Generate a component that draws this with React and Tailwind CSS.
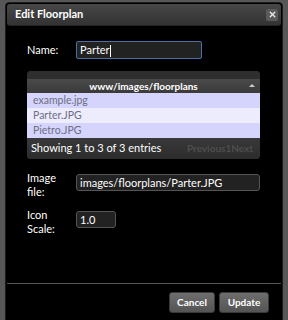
import { X } from 'lucide-react'

const ROWS = [
  ['example.jpg', 'bg-[#d4d4fc]'],
  ['Parter.JPG', 'bg-[#ececfd]'],
  ['Pietro.JPG', 'bg-[#d4d4fc]'],
]

const label = 'w-[49px] text-[11px] leading-[14px] text-white'
const field = 'h-[17px] bg-[#222] border border-[#555] rounded-[3px] px-[3px] text-[11px] leading-[15px] text-white'

export default function App() {
  return (
    <div className="w-[288px] h-[320px] bg-[#575757] overflow-hidden pt-[2px] pl-[5px]" style={{ fontFamily: 'Lato, "Open Sans", sans-serif' }}>
      <div className="w-[278px] h-[330px] bg-black border border-[#1c1c1c] rounded-t-[4px] flex flex-col">
        <div className="h-[22px] mx-px mt-px rounded-[3px] bg-gradient-to-b from-[#474747] to-[#333] border-b border-[#222] flex items-center justify-between pl-[8px] pr-[3px]">
          <span className="text-[11px] font-bold text-white">Edit Floorplan</span>
          <span className="w-[12px] h-[12px] rounded-[2px] bg-[#5a5a5a] flex items-center justify-center">
            <X size={9} strokeWidth={3.5} color="#eee" />
          </span>
        </div>

        <div className="pl-[21px] pr-[22px]">
          <div className="flex items-center mt-[15px]">
            <span className={label}>Name:</span>
            <div className="w-[126px] h-[18px] bg-[#222] border border-[#4a6fa8] rounded-[2px] px-[3px] text-[11px] leading-[16px] text-white">
              Parter<span className="inline-block w-px h-[12px] bg-white align-middle" />
            </div>
          </div>

          <div className="mt-[12px] w-[233px] rounded-[4px] overflow-hidden bg-[#333]">
            <div className="h-[8px] bg-[#2e2e2e]" />
            <div className="h-[14px] bg-gradient-to-b from-[#4a4a4a] to-[#3a3a3a] relative flex items-center justify-center">
              <span className="text-[10px] font-bold text-white leading-none">www/images/floorplans</span>
              <span className="absolute right-[5px] top-[5px] w-0 h-0 border-l-[3px] border-r-[3px] border-b-[3px] border-l-transparent border-r-transparent border-b-[#ccc]" />
            </div>
            {ROWS.map(([name, bg]) => (
              <div key={name} className={`h-[15px] ${bg} px-[6px] text-[10.5px] leading-[15px] text-[#6e6e84]`}>{name}</div>
            ))}
            <div className="h-[21px] bg-gradient-to-b from-[#393939] to-[#2c2c2c] flex items-center justify-between pl-[4px] pr-[7px]">
              <span className="text-[11px] text-white">Showing 1 to 3 of 3 entries</span>
              <span className="text-[10px] font-bold text-[#4e4e4e]">Previous1Next</span>
            </div>
          </div>

          <div className="flex items-start mt-[15px]">
            <span className={`${label} -mt-[3px]`}>Image<br />file:</span>
            <div className={`${field} w-[184px]`}>images/floorplans/Parter.JPG</div>
          </div>

          <div className="flex items-start mt-[12px]">
            <span className={`${label} -mt-[3px]`}>Icon<br />Scale:</span>
            <div className={`${field} w-[40px]`}>1.0</div>
          </div>
        </div>

        <div className="mt-[47px] h-px bg-[#555] mx-px" />
        <div className="flex justify-end gap-[4px] pr-[13px] pt-[8px]">
          <button className="w-[46px] h-[21px] rounded-[3px] bg-gradient-to-b from-[#6e6e6e] to-[#545454] border border-[#3a3a3a] text-[10px] font-bold text-white">Cancel</button>
          <button className="w-[50px] h-[21px] rounded-[3px] bg-gradient-to-b from-[#6e6e6e] to-[#545454] border border-[#3a3a3a] text-[10px] font-bold text-white">Update</button>
        </div>
      </div>
    </div>
  )
}
